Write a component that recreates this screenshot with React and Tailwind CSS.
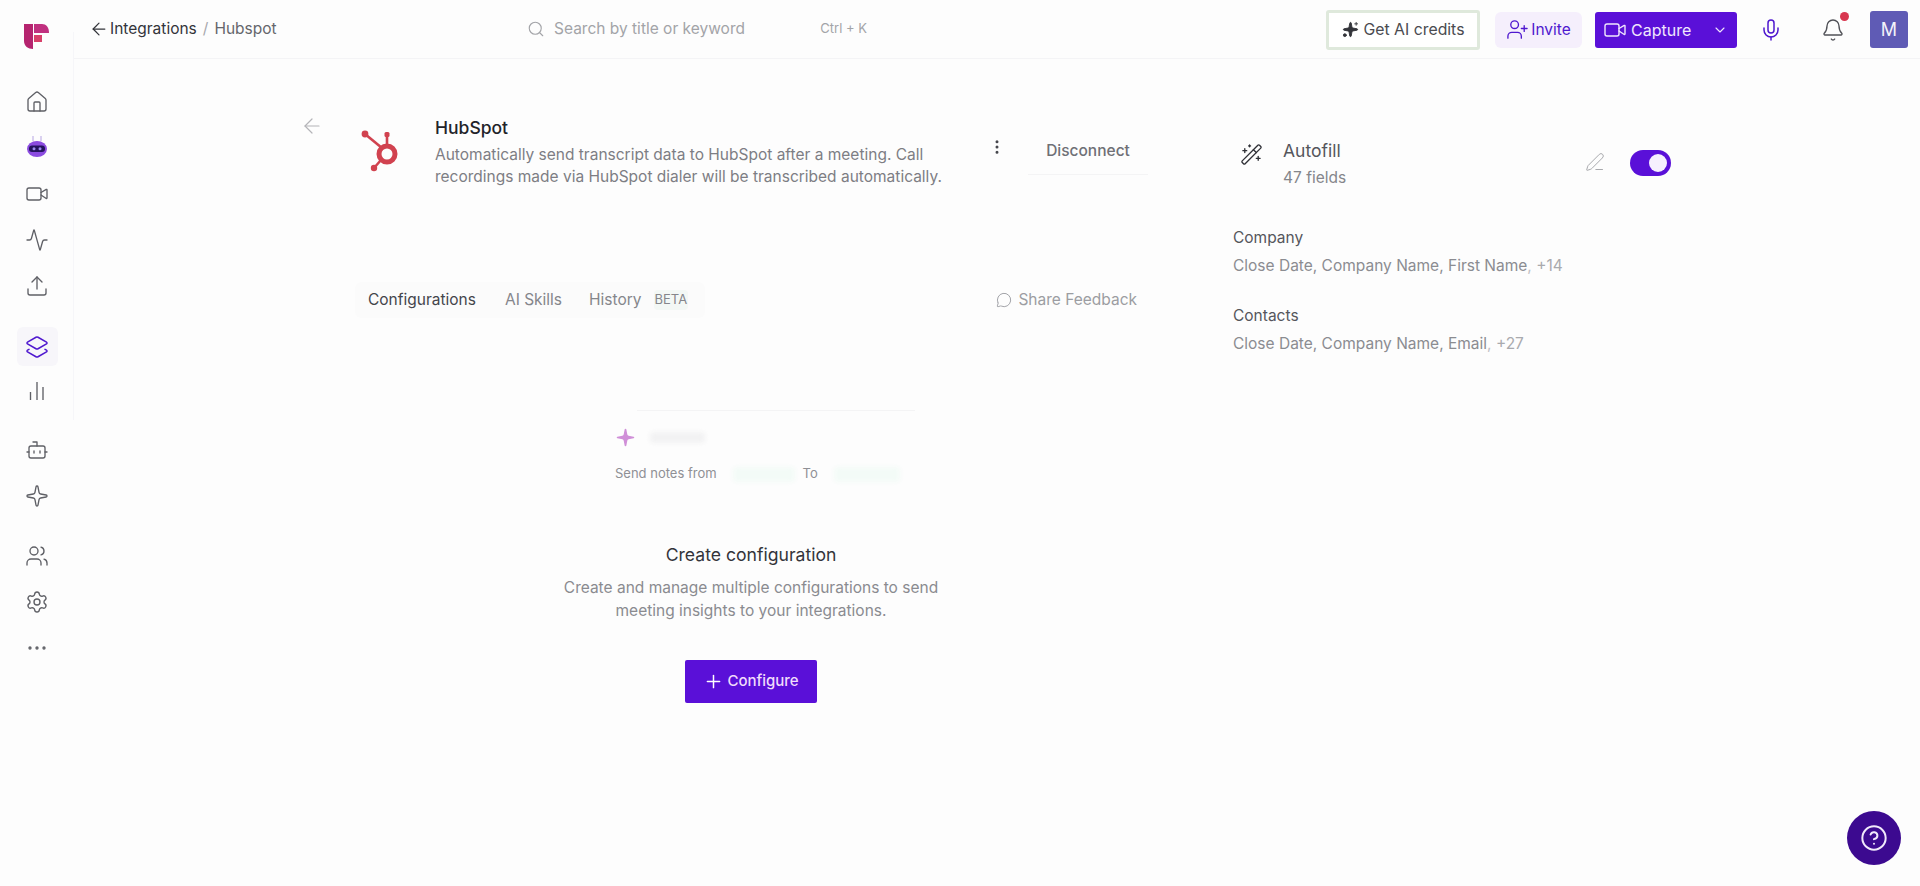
import React from "react";
import {
  ArrowLeft,
  Bell,
  ChevronDown,
  CircleHelp,
  Ellipsis,
  EllipsisVertical,
  House,
  Activity,
  Bot,
  Layers2,
  MessageCircle,
  Mic,
  PenLine,
  Plus,
  Search,
  Settings,
  Sparkle,
  Sparkles,
  Upload,
  UserPlus,
  Users,
  Video,
  WandSparkles,
} from "lucide-react";

function Logo() {
  return (
    <svg width="26" height="26" viewBox="0 0 26 26">
      <path d="M0 0h9v25c-5 0-9-3-9-8z" fill="#b5246f" />
      <path d="M10 0h8c4 0 7 3 7 9H10z" fill="#c0307f" />
      <rect x="10" y="11" width="8" height="7" fill="#d8406a" />
    </svg>
  );
}

function RobotBadge() {
  return (
    <svg width="22" height="24" viewBox="0 0 22 24">
      <path d="M7 1v5M15 1v5" stroke="#c4b5e8" strokeWidth="1.2" />
      <ellipse cx="11" cy="14" rx="10" ry="8" fill="#8b4be0" />
      <rect x="3" y="10.5" width="16" height="6.5" rx="3" fill="#24135e" />
      <circle cx="8" cy="13.7" r="1.5" fill="#9c8cf0" />
      <circle cx="14" cy="13.7" r="1.5" fill="#9c8cf0" />
    </svg>
  );
}

function HubspotLogo() {
  return (
    <svg width="40" height="44" viewBox="0 0 40 44" fill="none" stroke="#d1424f">
      <circle cx="27" cy="24" r="8" strokeWidth="5" />
      <path d="M5 4l17 14" strokeWidth="2.6" />
      <circle cx="5" cy="4" r="3.4" fill="#d1424f" stroke="none" />
      <path d="M27 4v12" strokeWidth="2.6" />
      <rect x="24.5" y="2" width="5" height="5" rx="1.5" fill="#d1424f" stroke="none" />
      <path d="M14 38l7-8" strokeWidth="2.6" />
      <circle cx="14" cy="38" r="3.2" fill="#d1424f" stroke="none" />
    </svg>
  );
}

function BarsIcon({ size, strokeWidth }) {
  return (
    <svg width={size} height={size} viewBox="0 0 24 24" fill="none" stroke="currentColor" strokeWidth={strokeWidth}>
      <path d="M5.5 21v-8M12 21V3M18 21v-13" />
    </svg>
  );
}

function SideItem({ icon: Icon, className = "" }) {
  return (
    <div className={"flex h-[46px] w-[46px] items-center justify-center text-[#5f6066] " + className}>
      <Icon size={24} strokeWidth={1.35} />
    </div>
  );
}

function Sidebar() {
  return (
    <aside className="relative flex h-full w-[74px] shrink-0 flex-col items-center pt-6">
      {/* faint divider, stops part way down */}
      <span className="absolute top-[32px] right-0 h-[388px] w-[1px] bg-[#f6f6f9]" />
      <div className="mr-[1px] h-[55px]">
        <Logo />
      </div>
      <SideItem icon={House} />
      <div className="-mt-[1px] mb-[1px] flex h-[46px] w-[46px] items-center justify-center">
        <RobotBadge />
      </div>
      <SideItem icon={Video} />
      <SideItem icon={Activity} />
      <SideItem icon={Upload} />
      <div className="mt-[18px] flex h-[39px] w-[41px] items-center justify-center rounded-md bg-[#f7f6fa] text-[#4f18cf]">
        <Layers2 size={24} strokeWidth={1.5} />
      </div>
      <div className="mt-[2px]">
        <SideItem icon={BarsIcon} />
      </div>
      <div className="mt-[13px]">
        <SideItem icon={Bot} />
      </div>
      <SideItem icon={Sparkle} />
      <div className="mt-[14px]">
        <SideItem icon={Users} />
      </div>
      <SideItem icon={Settings} />
      <SideItem icon={Ellipsis} />
    </aside>
  );
}

function Header() {
  return (
    <header className="flex h-[59px] items-center border-b border-[#f4f4f6] pt-[1px]">
      <div className="flex w-[446px] shrink-0 items-center pb-[2px] pl-[15px] text-[15.5px]">
        <ArrowLeft size={20} strokeWidth={1.5} className="mr-[1px] text-[#33343a]" />
        <span className="text-[#33343a]">Integrations</span>
        <span className="mx-[6px] text-[#a8a8ae]">/</span>
        <span className="text-[#65666c]">Hubspot</span>
      </div>
      <div className="flex w-[348px] shrink-0 items-center pr-[1px] pb-[2px] pl-[7px] text-[#a3a4a8]">
        <Search size={18} strokeWidth={1.5} className="mr-[9px]" />
        <span className="text-[15.5px]">Search by title or keyword</span>
        <span className="ml-auto text-[13px]">Ctrl + K</span>
      </div>
      <div className="ml-[458px] flex h-[40px] w-[154px] shrink-0 items-center justify-center gap-[5px] rounded-[3px] border-[3px] border-[#dfe9dc] bg-white text-[15.8px] text-[#4a4b50]">
        <Sparkles size={17} strokeWidth={1.3} fill="#33343a" className="text-[#33343a]" />
        Get AI credits
      </div>
      <div className="ml-[15px] flex h-[36px] w-[87px] shrink-0 items-center justify-center gap-[2px] rounded-md bg-[#f5effc] text-[15.5px] text-[#4f18cf]">
        <UserPlus size={23} strokeWidth={1.4} />
        Invite
      </div>
      <div className="ml-[13px] flex h-[36px] w-[142px] shrink-0 items-center rounded-[3px] bg-[#5a10d8] pl-[8px] text-[16px] text-[#f0e6fd]">
        <Video size={24} strokeWidth={1.4} className="mr-[4px]" />
        Capture
        <ChevronDown size={16} strokeWidth={1.6} className="ml-auto mr-[9px]" />
      </div>
      <Mic size={24} strokeWidth={1.5} className="ml-[22px] shrink-0 text-[#4f18cf]" />
      <div className="relative ml-[38px] shrink-0 text-[#505157]">
        <Bell size={24} strokeWidth={1.35} />
        <span className="absolute -top-[6px] -right-[4px] h-[9px] w-[9px] rounded-full bg-[#d8364f]" />
      </div>
      <div className="ml-[25px] flex h-[37px] w-[38px] shrink-0 items-center justify-center rounded-[3px] bg-[#5f5bb5] text-[18px] text-[#f2f2fa]">
        M
      </div>
    </header>
  );
}

function Intro() {
  return (
    <div className="flex">
      <ArrowLeft size={24} strokeWidth={1.2} className="mt-[3px] ml-[226px] shrink-0 text-[#b4b4b8]" />
      <div className="mt-[19px] ml-[36px] shrink-0">
        <HubspotLogo />
      </div>
      <div className="mt-[5px] ml-[35px] w-[512px] shrink-0">
        <h1 className="text-[17.5px] leading-[24px] font-medium text-[#222329]">HubSpot</h1>
        <p className="mt-[4px] text-[15.5px] leading-[22px] text-[#7d7e84]">
          Automatically send transcript data to HubSpot after a meeting. Call recordings made via HubSpot dialer will be
          transcribed automatically.
        </p>
      </div>
      <EllipsisVertical size={18} strokeWidth={2} className="mt-[27px] ml-[41px] shrink-0 text-[#45464c]" />
      <div className="mt-[21px] ml-[22px] flex h-[43px] w-[120px] shrink-0 items-center justify-center border-b border-[#f4f4f5] pb-[5px] text-[15.5px] font-medium text-[#6f7076]">
        Disconnect
      </div>
    </div>
  );
}

function Tabs() {
  return (
    <div className="mt-[94px] ml-[281px] flex h-[36px] w-[782px] items-center">
      <div className="flex h-full w-[350px] items-center rounded-md bg-[#fbfbfb] pl-[13px] text-[15.5px] text-[#85868b]">
        <span className="text-[#44454b]">Configurations</span>
        <span className="ml-[29px]">AI Skills</span>
        <span className="ml-[27px]">History</span>
        <span className="ml-[12px] rounded-sm bg-[#f3f8f5] px-[1px] text-[13px]">BETA</span>
      </div>
      <div className="ml-auto flex items-center text-[15.5px] text-[#9c9da2]">
        <MessageCircle size={16} strokeWidth={1.4} className="mr-[6px]" />
        Share Feedback
      </div>
    </div>
  );
}

function EmptyState() {
  return (
    <div className="ml-[281px] flex w-[792px] flex-col items-center">
      <div className="mt-[92px] ml-[50px] h-[1px] w-[278px] bg-[#f4f4f5]" />
      <div className="mt-[17px] ml-[18px] flex h-[18px] w-[290px] items-center">
        <Sparkle size={21} fill="#d08fd8" strokeWidth={0} />
        <div className="ml-[14px] h-[11px] w-[55px] rounded-sm bg-[#f2f2f3] blur-[2px]" />
      </div>
      <div className="mt-[19px] ml-[18px] flex h-[18px] w-[290px] items-center text-[13px] whitespace-nowrap text-[#8f9095]">
        <span>Send notes from</span>
        <div className="ml-[16px] h-[15px] w-[62px] shrink-0 rounded-sm bg-[#f3fbf7] blur-[2px]" />
        <span className="ml-[8px]">To</span>
        <div className="ml-[16px] h-[15px] w-[66px] shrink-0 rounded-sm bg-[#f3fbf7] blur-[2px]" />
      </div>
      <h2 className="mt-[59px] text-[17.6px] leading-[26px] text-[#33343a]">Create configuration</h2>
      <p className="mt-[8px] w-[400px] text-center text-[15.5px] leading-[23px] text-[#8a8b90]">
        Create and manage multiple configurations to send meeting insights to your integrations.
      </p>
      <button className="mt-[38px] flex h-[43px] w-[132px] items-center justify-center gap-[3px] rounded-[2px] bg-[#5a10d8] text-[15px] font-medium text-[#f0dcfb]">
        <Plus size={21} strokeWidth={1.7} className="text-white" />
        Configure
      </button>
    </div>
  );
}

function AutofillField({ title, fields, more }) {
  return (
    <div>
      <div className="text-[15.5px] leading-[22px] text-[#55565c]">{title}</div>
      <div className="mt-[6px] text-[15.5px] leading-[22px] text-[#8b8c91]">
        {fields}
        <span className="text-[#c0c0c4]">,</span> <span className="text-[#a9aaae]">{more}</span>
      </div>
    </div>
  );
}

function Autofill() {
  return (
    <div className="mt-[80px] w-[440px]">
      <div className="flex items-start">
        <WandSparkles size={23} strokeWidth={1.4} className="mt-[4px] ml-[7px] text-[#2f3036]" />
        <div className="ml-[20px]">
          <div className="text-[17.5px] leading-[24px] text-[#55565c]">Autofill</div>
          <div className="mt-[4px] text-[15.5px] leading-[22px] text-[#85868b]">47 fields</div>
        </div>
        <PenLine size={20} strokeWidth={1.2} className="mt-[13px] ml-[239px] text-[#a8a9ad]" />
        <div className="mt-[11px] ml-[25px] flex h-[26px] w-[41px] items-center justify-end rounded-full bg-[#5a10d8] pr-[4px]">
          <span className="h-[18px] w-[18px] rounded-full bg-[#f6f0fe]" />
        </div>
      </div>
      <div className="mt-[38px] flex flex-col gap-[28px]">
        <AutofillField title="Company" fields="Close Date, Company Name, First Name" more="+14" />
        <AutofillField title="Contacts" fields="Close Date, Company Name, Email" more="+27" />
      </div>
    </div>
  );
}

export default function App() {
  return (
    <div className="relative flex h-[886px] w-[1920px] overflow-hidden bg-[#fdfdfd] font-['Inter',sans-serif]">
      <Sidebar />
      <div className="flex min-w-0 flex-1 flex-col">
        <Header />
        <div className="flex">
          <div className="w-[1159px] shrink-0 pt-[52px]">
            <Intro />
            <Tabs />
            <EmptyState />
          </div>
          <Autofill />
        </div>
      </div>
      {/* help bubble */}
      <div className="absolute right-[19px] bottom-[21px] flex h-[54px] w-[54px] items-center justify-center rounded-full bg-[#3c0a90] text-[#f1e9fb]">
        <CircleHelp size={28} strokeWidth={1.7} />
      </div>
    </div>
  );
}
